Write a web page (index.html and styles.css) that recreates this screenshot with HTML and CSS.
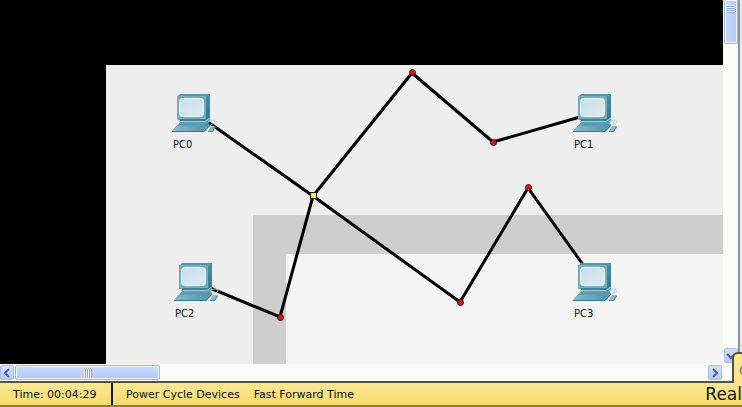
FILE: index.html
```
<!DOCTYPE html>
<html lang="en">
<head>
<meta charset="utf-8">
<title>Network Workspace</title>
<link rel="stylesheet" href="styles.css">
</head>
<body>
<svg class="defs" aria-hidden="true">
  <defs>
    <linearGradient id="screen" x1="0" y1="0" x2="1" y2="1">
      <stop offset="0" stop-color="#c9dfe9"/><stop offset="1" stop-color="#dcebf2"/>
    </linearGradient>
    <linearGradient id="side" x1="0" y1="0" x2="0" y2="1">
      <stop offset="0" stop-color="#4a8fa6"/><stop offset="1" stop-color="#2f788f"/>
    </linearGradient>
    <linearGradient id="keys" x1="0" y1="0" x2="1" y2="0">
      <stop offset="0" stop-color="#8ab8c8"/><stop offset="1" stop-color="#4e92a8"/>
    </linearGradient>
    <symbol id="pc" viewBox="0 0 46 40">
      <path d="M5 3l3-3h30l-4 3z" fill="#5795aa"/>
      <path d="M33 3l5-3v23l-5 4z" fill="url(#side)"/>
      <rect x="5" y="2" width="29" height="24" rx="1" fill="#72adc0"/>
      <rect x="7.500" y="4.500" width="24" height="18" rx="3" fill="url(#screen)" stroke="#eef6f9"/>
      <path d="M7 25h27l4-3v2l-5 4H9z" fill="#3c8299"/>
      <path d="M8 28h25l5-4v3l-4 5H5z" fill="#5b9db2"/>
      <path d="M7 27.500h26l4-3" fill="none" stroke="#a6cbd8"/>
      <path d="M4 32h26l6-3 2 1-7 7H0z" fill="url(#keys)"/>
      <path d="M0 37h31l7-7v2l-6 6H0z" fill="#347c92"/>
      <path d="M36 28c3-3 9-2 8 0s-7 2-5 4" fill="none" stroke="#b9ccd3"/>
      <path d="M39 32h4l-3 5h-4z" fill="#8ab8c8"/>
      <path d="M43 32l1 1-3 5h-5l0-1h4z" fill="#4a8ca2"/>
    </symbol>
  </defs>
</svg>
<div class="app">
  <main class="canvas">
    <div class="plan"><div class="building"><div class="room"></div></div></div>
    <svg class="cables" aria-hidden="true">
      <g fill="none" stroke="#000" stroke-width="3">
        <path d="M208 122L313 196 460 302 528 188 584 266"/>
        <path d="M210 288L280 317 313 196 412 73 493 142 580 117"/>
      </g>
      <g fill="#cf171d" stroke="#4d0b0d">
        <circle cx="412.500" cy="72.500" r="3"/>
        <circle cx="493.500" cy="142.500" r="3"/>
        <circle cx="528.500" cy="187.500" r="3"/>
        <circle cx="460.500" cy="302.500" r="3"/>
        <circle cx="280.500" cy="317.500" r="3"/>
      </g>
      <rect x="310.500" y="192.500" width="6" height="6" fill="#fff22d" stroke="#111"/>
    </svg>
    <div class="device pc0"><svg><use href="#pc"/></svg><span>PC0</span></div>
    <div class="device pc1"><svg><use href="#pc"/></svg><span>PC1</span></div>
    <div class="device pc2"><svg><use href="#pc"/></svg><span>PC2</span></div>
    <div class="device pc3"><svg><use href="#pc"/></svg><span>PC3</span></div>
  </main>
  <div class="vscroll">
    <div class="thumb"><i class="grip"></i></div>
    <button class="arrow" aria-label="Scroll down"><svg viewBox="0 0 14 14"><path d="M3 5l4 4 4-4"/></svg></button>
  </div>
  <div class="edge"></div>
  <div class="hscroll">
    <button class="arrow" aria-label="Scroll left"><svg viewBox="0 0 14 14"><path d="M9 3L5 7l4 4"/></svg></button>
    <div class="thumb"><i class="grip"></i></div>
    <button class="arrow last" aria-label="Scroll right"><svg viewBox="0 0 14 14"><path d="M5 3l4 4-4 4"/></svg></button>
  </div>
  <footer class="status">
    <span class="time">Time: 00:04:29</span>
    <nav class="actions">
      <button>Power Cycle Devices</button>
      <button>Fast Forward Time</button>
    </nav>
    <span class="mode">Real</span>
  </footer>
  <div class="tab"><svg viewBox="0 0 10 28"><circle cx="14" cy="17" r="6" fill="#ddd" stroke="#8a7d55" stroke-width="2"/></svg></div>
</div>
</body>
</html>
```
FILE: styles.css
```
* { box-sizing: border-box; }
body { margin: 0; font-family: "DejaVu Sans", Verdana, sans-serif; font-size: 11px; color: #111; }
button { margin: 0; padding: 0; border: 0; background: none; font: inherit; color: inherit; }
.defs { position: absolute; width: 0; height: 0; }

.app {
  position: relative;
  display: grid;
  grid-template-columns: 1fr 15px 4px;
  grid-template-rows: 1fr 17px 26px;
  height: 100vh;
  overflow: hidden;
}

.canvas { position: relative; display: flex; overflow: hidden; background: #000; padding: 65px 0 0 106px; }
.plan { flex: 1; display: flex; background: #eee; padding: 150px 0 0 147px; }
.building { flex: 1; display: flex; background: #cecece; padding: 39px 0 0 33px; }
.room { flex: 1; background: #f4f4f4; }
.cables { position: absolute; left: 0; top: 0; width: 100%; height: 100%; }

.device { position: absolute; display: flex; flex-direction: column; width: 46px; }
.device svg { width: 46px; height: 40px; }
.device span { margin-top: 4px; padding-left: 1px; line-height: 14px; font-family: "DejaVu Sans Condensed", "DejaVu Sans", Tahoma, sans-serif; }
.pc0 { left: 172px; top: 94px; }
.pc1 { left: 573px; top: 94px; }
.pc2 { left: 174px; top: 263px; }
.pc3 { left: 573px; top: 263px; }

.vscroll, .hscroll { display: flex; background: #fbfbf8; }
.vscroll { flex-direction: column; justify-content: space-between; padding: 0 0 1px 1px; }
.hscroll { grid-column: 1 / 3; padding: 1px 0; gap: 1px; }
.thumb { display: flex; align-items: center; justify-content: center; border: 1px solid #9db3d9; border-radius: 2px; box-shadow: inset 0 0 0 1px #f4f8ff; }
.vscroll .thumb { height: 44px; padding-bottom: 26px; border-top: 0; background: linear-gradient(90deg, #cbdafd, #b5c8f5); }
.hscroll .thumb { width: 145px; background: linear-gradient(#cbdafd, #b5c8f5); }
.grip { width: 8px; height: 8px; }
.hscroll .grip { background: repeating-linear-gradient(90deg, #eef3ff 0 1px, #8fa9df 1px 2px); }
.vscroll .grip { background: repeating-linear-gradient(#eef3ff 0 1px, #8fa9df 1px 2px); }
.arrow { display: flex; align-items: center; justify-content: center; width: 14px; height: 15px; border: 1px solid #a9bce6; border-radius: 2px; background: linear-gradient(#d3dffd, #b7c9f7); }
.arrow svg { flex: none; width: 14px; height: 14px; fill: none; stroke: #4d6185; stroke-width: 2; }
.last { margin-left: auto; margin-right: 16px; }
.edge { grid-row: 1 / 3; grid-column: 3; background: #e9e9e4; border-left: 2px solid #8795b5; }

.status {
  grid-column: 1 / -1;
  display: flex;
  align-items: stretch;
  border-top: 2px solid #54523f;
  border-bottom: 2px solid #8f7c33;
  background: linear-gradient(#fbe794, #f6dc6d);
  line-height: 24px;
  white-space: nowrap;
}
.time { width: 113px; padding-left: 13px; border-right: 2px solid #1c180c; }
.actions { display: flex; gap: 14px; padding-left: 13px; }
.mode { margin-left: auto; font-size: 17px; line-height: 22px; }

.tab { position: absolute; right: 0; bottom: 24px; width: 10px; height: 31px; border: solid #54523f; border-width: 2px 0 0 2px; border-top-left-radius: 6px; background: #fbe68f; }
.tab svg { display: block; width: 100%; height: 28px; }
```
